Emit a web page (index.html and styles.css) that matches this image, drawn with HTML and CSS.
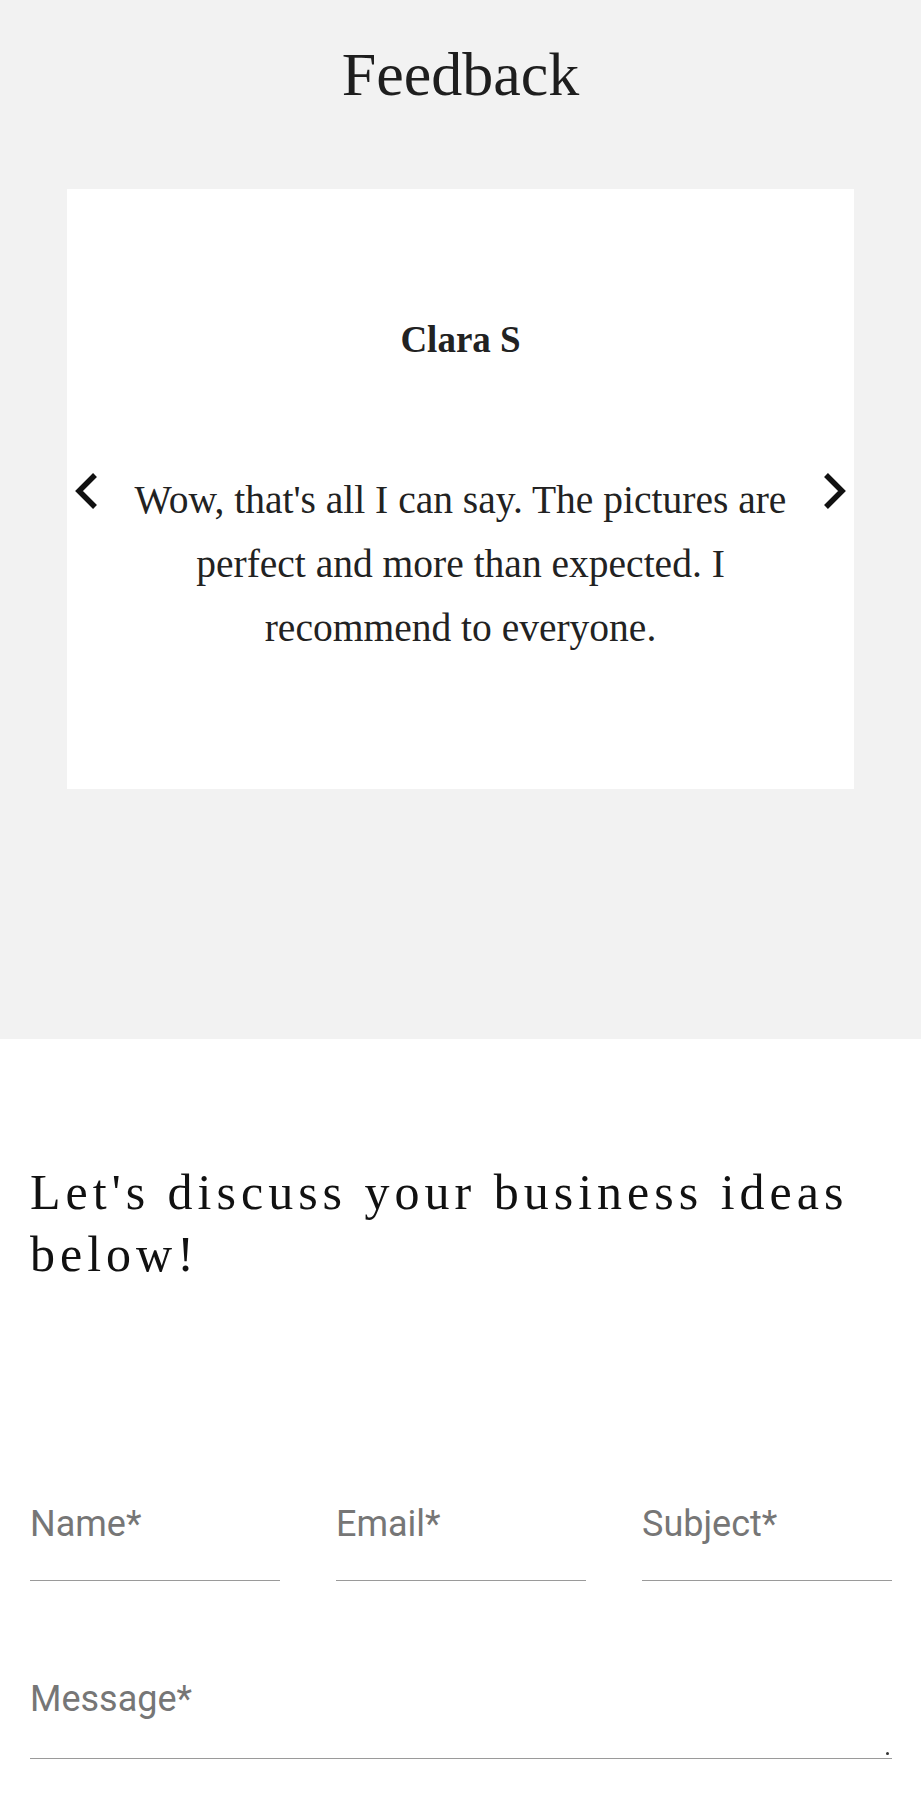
FILE: index.html
```html
<!DOCTYPE html>
<html lang="en">
<head>
<meta charset="utf-8">
<title>Feedback</title>
<link rel="stylesheet" href="styles.css">
</head>
<body>
<section class="feedback">
  <h1 class="feedback-title">Feedback</h1>
  <div class="card">
    <h3 class="card-name">Clara S</h3>
    <div class="slider-row">
      <button class="arrow" aria-label="Previous">
        <svg width="24" height="40" viewBox="0 0 24 40"><path d="M20 4 L4 20 L20 36" fill="none" stroke="#111" stroke-width="5.5" stroke-linejoin="miter"/></svg>
      </button>
      <p class="card-text">Wow, that's all I can say. The pictures are perfect and more than expected. I recommend to everyone.</p>
      <button class="arrow" aria-label="Next">
        <svg width="24" height="40" viewBox="0 0 24 40"><path d="M4 4 L20 20 L4 36" fill="none" stroke="#111" stroke-width="5.5" stroke-linejoin="miter"/></svg>
      </button>
    </div>
  </div>
</section>
<section class="contact">
  <h2 class="contact-title">Let's discuss your business ideas below!</h2>
  <form class="contact-form">
    <div class="row">
      <input class="field" type="text" placeholder="Name*">
      <input class="field" type="email" placeholder="Email*">
      <input class="field" type="text" placeholder="Subject*">
    </div>
    <div class="message-wrap">
      <textarea class="field message" placeholder="Message*"></textarea>
    </div>
  </form>
</section>
</body>
</html>
```
FILE: styles.css
```css
* { box-sizing: border-box; }
html, body { margin: 0; padding: 0; background: #fff; }
body { font-family: "Liberation Serif", "Times New Roman", serif; color: #222; }

.feedback {
  background: #f2f2f2;
  padding: 37px 0 250px;
  display: flex;
  flex-direction: column;
  align-items: center;
}
.feedback-title {
  margin: 0 0 78px;
  font-size: 62px;
  line-height: 74px;
  font-weight: 400;
  color: #1e1e1e;
}
.card {
  width: 787px;
  height: 600px;
  background: #fff;
  display: flex;
  flex-direction: column;
  justify-content: center;
  padding: 0 8px;
}
.card-name {
  margin: 0 0 107px;
  text-align: center;
  font-size: 37px;
  line-height: 43px;
  font-weight: 700;
  color: #222;
}
.slider-row {
  display: grid;
  grid-template-columns: 24px 1fr 24px;
  align-items: start;
}
.arrow {
  border: 0;
  background: none;
  padding: 0;
  margin-top: 3px;
  width: 24px;
  height: 40px;
  display: block;
}
.arrow svg { display: block; }
.card-text {
  margin: 0 auto;
  max-width: 690px;
  text-align: center;
  font-size: 39.5px;
  line-height: 64px;
  color: #222;
}

.contact {
  padding: 122px 29px 42px 30px;
}
.contact-title {
  margin: 0 0 219px;
  font-size: 50px;
  line-height: 62px;
  font-weight: 400;
  letter-spacing: 5px;
  color: #111;
}
.contact-form { display: flex; flex-direction: column; gap: 98px; }
.row {
  display: grid;
  grid-template-columns: repeat(3, 1fr);
  gap: 56px;
}
.field {
  display: block;
  width: 100%;
  border: 0;
  border-bottom: 1px solid #9a9a9a;
  background: transparent;
  font-family: Roboto, "Liberation Sans", sans-serif;
  font-size: 36px;
  line-height: 40px;
  height: 77px;
  padding: 0 0 36px;
  color: #333;
  outline: none;
}
.field::placeholder { color: #767676; opacity: 1; }
.message-wrap { position: relative; }
.message {
  height: 80px;
  padding: 0 0 39px;
  resize: none;
  overflow: hidden;
}
.message-wrap::after {
  content: "";
  position: absolute;
  right: 3px;
  bottom: 4px;
  width: 3px;
  height: 3px;
  background: #333;
  border-radius: 50%;
}
```
